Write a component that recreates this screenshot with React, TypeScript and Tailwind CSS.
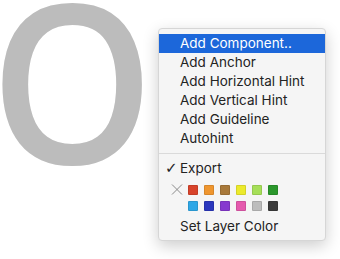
const swatchRows = [
  ["#d8432b", "#ef962f", "#a8793a", "#ecea2c", "#a6df58", "#2b972c"],
  ["#2ea7e6", "#2b37bd", "#8638cf", "#e55aae", "#bdbdbd", "#3b3b3b"],
];

const items = ["Add Anchor", "Add Horizontal Hint", "Add Vertical Hint", "Add Guideline", "Autohint"];

export default function App() {
  return (
    <div className="relative w-[340px] h-[259px] overflow-hidden bg-white font-['Inter','Liberation_Sans',sans-serif]">
      {/* glyph preview on the canvas */}
      <div className="absolute left-[-10px] top-[-33px] origin-top-left scale-x-[0.94] text-[222px] leading-none font-semibold text-[#bcbcbc] font-['Open_Sans',sans-serif] select-none">
        O
      </div>

      {/* context menu */}
      <div className="absolute left-[158px] top-[28px] w-[168px] bg-[#f5f5f5] border border-[#d6d6d6] rounded-[4px] shadow-[0_5px_16px_rgba(0,0,0,0.2)] pt-[5px] pb-[4px] text-[13.5px] text-[#232323]">
        <div className="h-[19px] flex items-center pl-[21px] bg-[#1c67da] text-white">Add Component..</div>
        {items.map((t) => (
          <div key={t} className="h-[19px] flex items-center pl-[21px]">
            {t}
          </div>
        ))}
        <div className="h-px bg-[#dadada] my-[5px]" />
        <div className="h-[19px] flex items-center pl-[6px]">
          <span className="w-[15px] text-[15px] leading-none font-['DejaVu_Sans',sans-serif]">✓</span>
          Export
        </div>
        <div className="flex flex-col gap-[6px] mt-[6px] pl-[11px]">
          {swatchRows.map((row, i) => (
            <div key={i} className="flex items-center">
              <div className="w-[18px] flex items-center">
                {i === 0 && (
                  <svg width="12" height="11" viewBox="0 0 12 11" className="ml-px">
                    <path d="M1 0.5L11 10.5M11 0.5L1 10.5" stroke="#8a8a8a" strokeWidth="1" fill="none" />
                  </svg>
                )}
              </div>
              <div className="flex gap-[6px]">
                {row.map((c) => (
                  <div
                    key={c}
                    className="w-[10px] h-[10px] rounded-[1px] border border-black/10"
                    style={{ backgroundColor: c }}
                  />
                ))}
              </div>
            </div>
          ))}
        </div>
        <div className="h-[19px] flex items-center pl-[21px] mt-[6px]">Set Layer Color</div>
      </div>
    </div>
  );
}
